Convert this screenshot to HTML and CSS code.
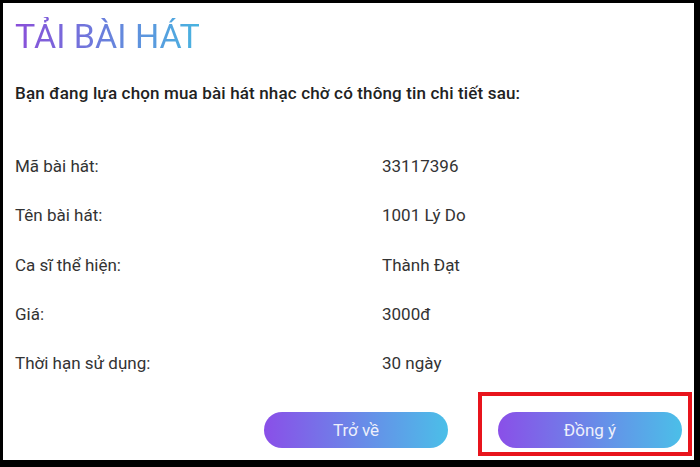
FILE: index.html
```html
<!DOCTYPE html>
<html lang="vi">
<head>
<meta charset="utf-8">
<link rel="stylesheet" href="styles.css">
</head>
<body>
<div class="frame">
  <h1 class="title">TẢI BÀI HÁT</h1>
  <p class="intro">Bạn đang lựa chọn mua bài hát nhạc chờ có thông tin chi tiết sau:</p>
  <div class="rows">
    <div class="row"><span class="label">Mã bài hát:</span><span class="value">33117396</span></div>
    <div class="row"><span class="label">Tên bài hát:</span><span class="value">1001 Lý Do</span></div>
    <div class="row"><span class="label">Ca sĩ thể hiện:</span><span class="value">Thành Đạt</span></div>
    <div class="row"><span class="label">Giá:</span><span class="value">3000đ</span></div>
    <div class="row"><span class="label">Thời hạn sử dụng:</span><span class="value">30 ngày</span></div>
  </div>
  <div class="actions">
    <button class="btn">Trở về</button>
    <button class="btn btn-ok">Đồng ý<span class="mark"></span></button>
  </div>
</div>
</body>
</html>
```
FILE: styles.css
```css
html, body {
  margin: 0;
  padding: 0;
  background: #000;
}
.frame {
  box-sizing: border-box;
  width: 700px;
  height: 467px;
  background: #fff;
  border-style: solid;
  border-color: #000;
  border-width: 3px 6px 7px 3px;
  padding: 14px 12px 12px 12px;
  display: flex;
  flex-direction: column;
  font-family: Roboto, "Liberation Sans", sans-serif;
}
.title {
  margin: 0;
  font-size: 34px;
  line-height: 38px;
  font-weight: 400;
  align-self: flex-start;
  background: linear-gradient(90deg, #8a4ed9, #48b4e0);
  -webkit-background-clip: text;
  background-clip: text;
  color: transparent;
}
.intro {
  margin: 28px 0 0 0;
  font-size: 17px;
  line-height: 20px;
  font-weight: 500;
  letter-spacing: 0.15px;
  color: #222;
}
.rows {
  margin-top: 53px;
  display: flex;
  flex-direction: column;
  gap: 29.3px;
}
.row {
  display: grid;
  grid-template-columns: 367px 1fr;
  font-size: 17px;
  line-height: 20px;
  color: #333;
}
.actions {
  margin-top: auto;
  display: flex;
  justify-content: flex-end;
  gap: 50px;
}
.btn {
  position: relative;
  width: 184px;
  height: 36px;
  border: none;
  border-radius: 18px;
  background: linear-gradient(90deg, #8a4fe8, #4bbfe8);
  color: #eef0fb;
  font-family: Roboto, "Liberation Sans", sans-serif;
  font-size: 17px;
  padding: 0;
}
.mark {
  position: absolute;
  left: -20px;
  top: -20px;
  right: -10px;
  bottom: -8px;
  border: 4px solid #e8141c;
  pointer-events: none;
}
```
